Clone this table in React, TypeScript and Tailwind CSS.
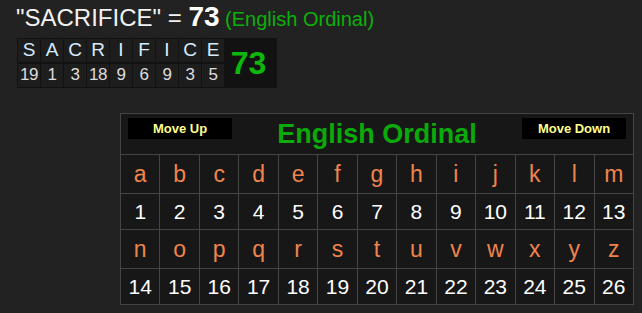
const word = 'SACRIFICE'
const letters = 'abcdefghijklmnopqrstuvwxyz'.split('')

function value(ch: string) {
  return ch.toLowerCase().charCodeAt(0) - 96
}

function LetterRow({ chars }: { chars: string[] }) {
  return (
    <>
      {chars.map((c) => (
        <div key={c} className="h-[39px] border-r border-b border-[#444] flex items-center justify-center pt-[1px] text-[23px] text-[#f0844c]">
          {c}
        </div>
      ))}
    </>
  )
}

function NumberRow({ chars }: { chars: string[] }) {
  return (
    <>
      {chars.map((c) => (
        <div key={c} className="h-[36px] border-r border-b border-[#444] flex items-center justify-center pt-[1px] text-[21px] text-white">
          {value(c)}
        </div>
      ))}
    </>
  )
}

export default function App() {
  const first = letters.slice(0, 13)
  const second = letters.slice(13)

  return (
    <div className="w-full h-[313px] overflow-hidden bg-[#222222] font-['Liberation_Sans',Arial,sans-serif]">
      {/* ── Summary line ── */}
      <div className="flex items-baseline pl-[16px] pt-[3px] leading-none">
        <span className="text-[24px] text-[#f2f2f2] whitespace-pre">"SACRIFICE" = </span>
        <span className="text-[28px] font-bold text-white">73</span>
        <span className="text-[20px] text-[#0bb00b] whitespace-pre"> (English Ordinal)</span>
      </div>

      {/* ── Word breakdown ── */}
      <div className="mt-[7px] ml-[17px] inline-flex bg-[#121212] p-px gap-px">
        <div className="grid grid-cols-[repeat(9,22px)] gap-px">
          {word.split('').map((c, i) => (
            <div key={'l' + i} className="h-[23px] bg-[#1d1d1d] flex items-center justify-center text-[19px] text-[#d6ebff]">
              {c}
            </div>
          ))}
          {word.split('').map((c, i) => (
            <div key={'n' + i} className="h-[23px] bg-[#1d1d1d] flex items-center justify-center text-[17px] tracking-[-0.5px] text-[#dddddd]">
              {value(c)}
            </div>
          ))}
        </div>
        <div className="w-[51px] flex items-center justify-center pr-[4px] text-[32px] font-bold text-[#0cb80c]">73</div>
      </div>

      {/* ── Cipher chart ── */}
      <div className="mt-[25px] ml-[120px] w-[514px] border-l border-t border-[#444] bg-[#171717]">
        <div className="h-[41px] border-r border-b border-[#444] flex justify-between items-start px-[7px]">
          <button className="mt-[4px] w-[104px] h-[21px] bg-black text-[13px] font-bold text-[#ffff8c]">Move Up</button>
          <div className="self-center text-[27px] font-bold text-[#0aaa0a] leading-none pt-[1px]">English Ordinal</div>
          <button className="mt-[4px] w-[104px] h-[21px] bg-black text-[13px] font-bold text-[#ffff8c]">Move Down</button>
        </div>
        <div className="grid grid-cols-[repeat(13,minmax(0,1fr))]">
          <LetterRow chars={first} />
          <NumberRow chars={first} />
          <LetterRow chars={second} />
          <NumberRow chars={second} />
        </div>
      </div>
    </div>
  )
}
